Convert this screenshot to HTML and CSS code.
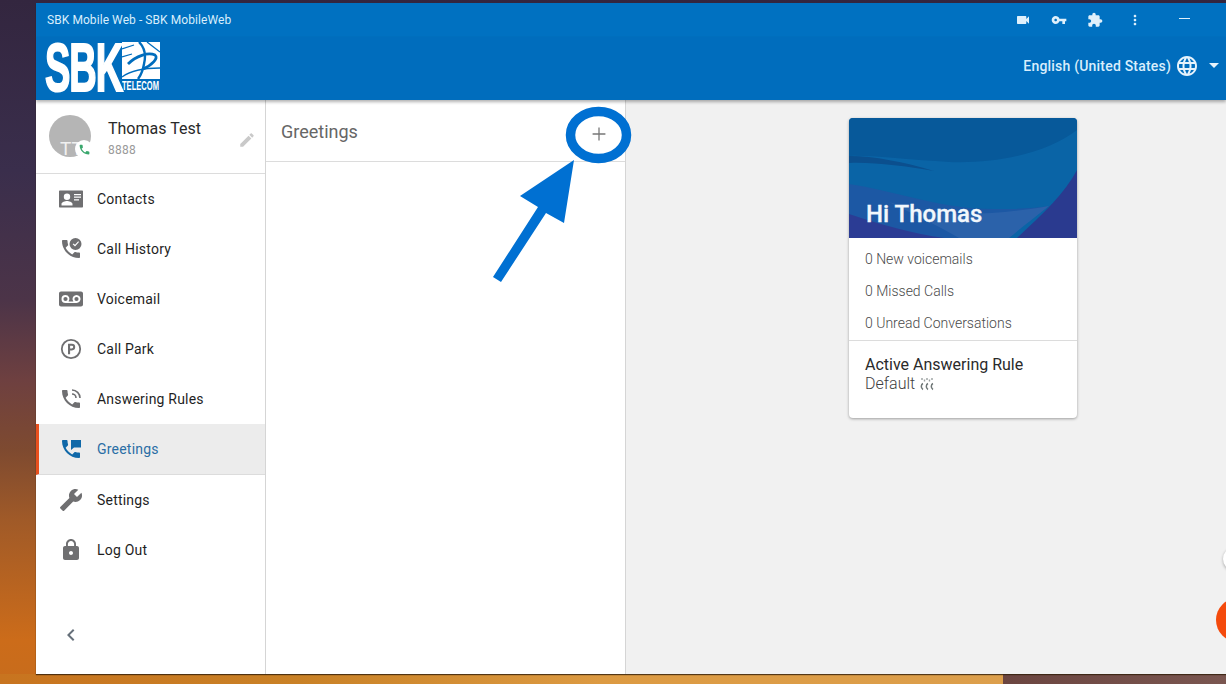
FILE: index.html
```html
<!DOCTYPE html>
<html lang="en">
<head>
<meta charset="utf-8">
<title>SBK Mobile Web</title>
<link rel="stylesheet" href="styles.css">
</head>
<body>
<div class="window">
  <div class="titlebar">
    <span class="title">SBK Mobile Web - SBK MobileWeb</span>
    <div class="title-icons">
      <svg class="ti" viewBox="0 0 24 24"><path d="M17 10.5V7c0-.55-.45-1-1-1H4c-.55 0-1 .45-1 1v10c0 .55.45 1 1 1h12c.55 0 1-.45 1-1v-3.5l4 4v-11l-4 4z"/></svg>
      <svg class="ti" viewBox="0 0 24 24"><path d="M12.65 10C11.83 7.67 9.61 6 7 6c-3.31 0-6 2.69-6 6s2.69 6 6 6c2.61 0 4.83-1.67 5.65-4H17v4h4v-4h2v-4H12.65zM7 14c-1.1 0-2-.9-2-2s.9-2 2-2 2 .9 2 2-.9 2-2 2z"/></svg>
      <svg class="ti" viewBox="0 0 24 24"><path d="M20.5 11H19V7c0-1.1-.9-2-2-2h-4V3.5C13 2.12 11.88 1 10.5 1S8 2.12 8 3.5V5H4c-1.1 0-1.99.9-1.99 2v3.8H3.5c1.49 0 2.7 1.21 2.7 2.7s-1.21 2.7-2.7 2.7H2V20c0 1.1.9 2 2 2h3.8v-1.5c0-1.49 1.21-2.7 2.7-2.7 1.49 0 2.7 1.21 2.7 2.7V22H17c1.1 0 2-.9 2-2v-4h1.5c1.38 0 2.5-1.12 2.5-2.5S21.88 11 20.5 11z"/></svg>
      <svg class="ti ti-more" viewBox="0 0 24 24"><path d="M12 8c1.1 0 2-.9 2-2s-.9-2-2-2-2 .9-2 2 .9 2 2 2zm0 2c-1.1 0-2 .9-2 2s.9 2 2 2 2-.9 2-2-.9-2-2-2zm0 6c-1.1 0-2 .9-2 2s.9 2 2 2 2-.9 2-2-.9-2-2-2z"/></svg>
      <span class="minimize"></span>
    </div>
  </div>
  <header class="header">
    <div class="logo">
      <span class="logo-sbk">SBK</span>
      <div class="logo-side">
        <svg class="logo-globe" viewBox="0 0 38 37">
          <rect width="38" height="37" fill="#fff"/>
          <path d="M0 7L12 3M0 15L10 12M0 35C8 29 22 26 38 26" stroke="#006dbd" stroke-width="1.300" fill="none"/>
          <path d="M25 0L38 10" stroke="#006dbd" stroke-width="1.300" fill="none"/>
          <path d="M6 22C14 14 26 10 33 13C37 16 30 23 21 27" stroke="#006dbd" stroke-width="2.800" fill="none"/>
          <path d="M17 0C23 6 24 14 22 22C21 28 19 33 16 37" stroke="#006dbd" stroke-width="2.400" fill="none"/>
        </svg>
        <span class="logo-telecom">TELECOM</span>
      </div>
    </div>
    <div class="lang">
      <span class="lang-label">English (United States)</span>
      <svg class="globe" viewBox="0 0 24 24"><path d="M11.99 2C6.47 2 2 6.48 2 12s4.47 10 9.99 10C17.52 22 22 17.52 22 12S17.52 2 11.99 2zm6.93 6h-2.95c-.32-1.25-.78-2.45-1.38-3.56 1.84.63 3.37 1.91 4.33 3.56zM12 4.04c.83 1.2 1.48 2.53 1.91 3.96h-3.82c.43-1.43 1.08-2.76 1.91-3.96zM4.26 14C4.1 13.36 4 12.69 4 12s.1-1.36.26-2h3.38c-.08.66-.14 1.32-.14 2 0 .68.06 1.34.14 2H4.26zm.82 2h2.95c.32 1.25.78 2.45 1.38 3.56-1.84-.63-3.37-1.9-4.33-3.56zm2.95-8H5.08c.96-1.66 2.49-2.93 4.33-3.56C8.81 5.55 8.35 6.75 8.03 8zM12 19.96c-.83-1.2-1.48-2.53-1.91-3.96h3.82c-.43 1.43-1.08 2.76-1.91 3.96zM14.34 14H9.66c-.09-.66-.16-1.32-.16-2 0-.68.07-1.35.16-2h4.68c.09.65.16 1.32.16 2 0 .68-.07 1.34-.16 2zm.25 5.56c.6-1.11 1.06-2.31 1.38-3.56h2.95c-.96 1.65-2.49 2.93-4.33 3.56zM16.36 14c.08-.66.14-1.32.14-2 0-.68-.06-1.34-.14-2h3.38c.16.64.26 1.31.26 2s-.1 1.36-.26 2h-3.38z"/></svg>
      <span class="caret"></span>
    </div>
  </header>
  <div class="main">
    <aside class="sidebar">
      <div class="profile">
        <div class="avatar">
          <span class="avatar-text">TT</span>
          <span class="status">
            <svg viewBox="0 0 24 24"><path d="M6.62 10.79c1.44 2.83 3.76 5.14 6.59 6.59l2.2-2.2c.27-.27.67-.36 1.02-.24 1.12.37 2.33.57 3.57.57.55 0 1 .45 1 1V20c0 .55-.45 1-1 1-9.39 0-17-7.61-17-17 0-.55.45-1 1-1h3.5c.55 0 1 .45 1 1 0 1.25.2 2.45.57 3.57.11.35.03.74-.25 1.02l-2.2 2.2z"/></svg>
          </span>
        </div>
        <div class="who">
          <div class="who-name">Thomas Test</div>
          <div class="who-ext">8888</div>
        </div>
        <svg class="edit" viewBox="0 0 24 24"><path d="M3 17.25V21h3.75L17.81 9.94l-3.75-3.75L3 17.25zM20.71 7.04c.39-.39.39-1.02 0-1.41l-2.34-2.34c-.39-.39-1.02-.39-1.41 0l-1.83 1.83 3.75 3.75 1.83-1.83z"/></svg>
      </div>
      <nav class="nav">
        <a class="item">
          <svg class="ico" viewBox="0 0 24 24"><path fill-rule="evenodd" d="M1 3.500h22c.6 0 1 .4 1 1v15c0 .6-.4 1-1 1H1c-.6 0-1-.4-1-1v-15c0-.6.4-1 1-1zm7 3a3.200 3.200 0 1 0 0 6.400 3.200 3.200 0 0 0 0-6.400zM2.500 18.500h11v-1.600c0-1.900-3.700-3-5.500-3s-5.500 1.100-5.500 3v1.600zM15 7v1.200h7V7h-7zm0 2.600v1.200h7V9.600h-7zm0 2.600v1.200h5v-1.200h-5z"/></svg>
          <span>Contacts</span>
        </a>
        <a class="item">
          <svg class="ico" viewBox="0 0 24 24"><path d="M6.620 10.790c1.440 2.830 3.760 5.140 6.590 6.590l2.200-2.200c.27-.27.67-.36 1.020-.24 1.120.37 2.330.57 3.570.57.55 0 1 .45 1 1V20c0 .55-.45 1-1 1-9.390 0-17-7.610-17-17 0-.55.45-1 1-1h3.500c.55 0 1 .45 1 1 0 1.250.2 2.450.57 3.570.11.350.03.740-.25 1.020l-2.200 2.200z"/><path fill-rule="evenodd" d="M16.500 1a6 6 0 1 1 0 12 6 6 0 0 1 0-12zm2.700 3.300-3.200 3.400-1.500-1.300-.8.9 2.300 2.100 4-4.300-.8-.8z"/></svg>
          <span>Call History</span>
        </a>
        <a class="item">
          <svg class="ico" viewBox="0 0 24 24"><path fill-rule="evenodd" d="M2 4.500h20c1.100 0 2 .9 2 2v11c0 1.100-.9 2-2 2H2c-1.100 0-2-.9-2-2v-11c0-1.100.9-2 2-2zm4.500 3.500a4 4 0 0 0 0 8h11a4 4 0 1 0-3.100-1.500H9.600A4 4 0 0 0 6.500 8zm0 1.900a2.100 2.100 0 1 1 0 4.200 2.100 2.100 0 0 1 0-4.200zm11 0a2.100 2.100 0 1 1 0 4.200 2.100 2.100 0 0 1 0-4.200z"/></svg>
          <span>Voicemail</span>
        </a>
        <a class="item">
          <svg class="ico" viewBox="0 0 24 24"><circle cx="12" cy="12" r="9.200" fill="none" stroke="#6f6f71" stroke-width="1.800"/><path fill-rule="evenodd" d="M9 6.800h3.900a3.300 3.300 0 0 1 0 6.600h-1.800v3.800H9V6.800zm2.100 1.900v2.800h1.700a1.400 1.400 0 0 0 0-2.800h-1.700z"/></svg>
          <span>Call Park</span>
        </a>
        <a class="item">
          <svg class="ico" viewBox="0 0 24 24"><path d="M6.620 10.790c1.440 2.830 3.760 5.140 6.590 6.590l2.200-2.200c.27-.27.67-.36 1.020-.24 1.120.37 2.330.57 3.570.57.55 0 1 .45 1 1V20c0 .55-.45 1-1 1-9.390 0-17-7.610-17-17 0-.55.45-1 1-1h3.500c.55 0 1 .45 1 1 0 1.250.2 2.450.57 3.570.11.350.03.740-.25 1.020l-2.200 2.200z"/><path d="M13 3a8 8 0 0 1 8 8M13 7a4 4 0 0 1 4 4" fill="none" stroke="#6f6f71" stroke-width="1.600"/></svg>
          <span>Answering Rules</span>
        </a>
        <a class="item active">
          <svg class="ico" viewBox="0 0 24 24"><path d="M6.620 10.790c1.440 2.830 3.760 5.140 6.590 6.590l2.200-2.200c.27-.27.67-.36 1.020-.24 1.120.37 2.330.57 3.570.57.55 0 1 .45 1 1V20c0 .55-.45 1-1 1-9.390 0-17-7.610-17-17 0-.55.45-1 1-1h3.500c.55 0 1 .45 1 1 0 1.250.2 2.450.57 3.570.11.350.03.740-.25 1.020l-2.200 2.200z"/><path d="M12 3h10v7.500h-7l-3 2.500V3z"/></svg>
          <span>Greetings</span>
        </a>
        <a class="item">
          <svg class="ico flip" viewBox="0 0 24 24"><path d="M22.700 19l-9.100-9.100c.9-2.300.4-5-1.500-6.900-2-2-5-2.400-7.400-1.300L9 6 6 9 1.600 4.700C.4 7.100.9 10.100 2.900 12.100c1.900 1.900 4.600 2.400 6.900 1.500l9.100 9.100c.4.4 1 .4 1.400 0l2.300-2.300c.5-.4.5-1.100.1-1.400z"/></svg>
          <span>Settings</span>
        </a>
        <a class="item">
          <svg class="ico" viewBox="0 0 24 24"><path d="M18 8h-1V6c0-2.760-2.240-5-5-5S7 3.240 7 6v2H6c-1.100 0-2 .9-2 2v10c0 1.100.9 2 2 2h12c1.100 0 2-.9 2-2V10c0-1.100-.9-2-2-2zm-6 9c-1.100 0-2-.9-2-2s.9-2 2-2 2 .9 2 2-.9 2-2 2zm3.100-9H8.900V6c0-1.710 1.390-3.100 3.100-3.100 1.710 0 3.100 1.390 3.100 3.100v2z"/></svg>
          <span>Log Out</span>
        </a>
      </nav>
      <div class="collapse">
        <svg class="ico" viewBox="0 0 24 24"><path d="M15.410 7.410L14 6l-6 6 6 6 1.410-1.410L10.830 12z"/></svg>
      </div>
    </aside>
    <section class="middle">
      <div class="mid-head">
        <span class="mid-title">Greetings</span>
        <svg class="plus" viewBox="0 0 24 24"><path d="M19 12.700h-6.300V19h-1.400v-6.300H5v-1.400h6.300V5h1.400v6.300H19v1.400z"/></svg>
      </div>
    </section>
    <section class="content">
      <div class="card">
        <div class="hero">
          <svg class="hero-art" viewBox="0 0 228 120" preserveAspectRatio="none">
            <rect width="228" height="120" fill="#0a64a6"/>
            <path d="M0 0H228V12C200 34 150 46 100 44C60 42 25 37 0 38Z" fill="#07599a"/>
            <path d="M0 38C25 38 55 44 85 53C55 48 25 44 0 45Z" fill="#0b4f8e"/>
            <path d="M0 66C40 72 80 86 120 90C150 92 180 91 200 88C185 100 170 110 160 120H0Z" fill="#1c58a4"/>
            <path d="M40 84C80 98 130 100 200 88C185 100 172 110 160 120H110C90 108 60 94 40 84Z" fill="#2b62aa"/>
            <path d="M0 96C30 106 65 116 95 120H0Z" fill="#2b3c94"/>
            <path d="M228 52C216 75 195 95 168 120H228Z" fill="#2a3a8f"/>
          </svg>
          <span class="hero-text">Hi Thomas</span>
        </div>
        <div class="stats">
          <div class="stat">0 New voicemails</div>
          <div class="stat">0 Missed Calls</div>
          <div class="stat">0 Unread Conversations</div>
        </div>
        <div class="rule">
          <div class="rule-title">Active Answering Rule</div>
          <div class="rule-value">Default
            <svg class="spin" viewBox="0 0 16 14"><path d="M4 6.500C2 7.500 1.500 11 4 12.500M9 6.500C7 7.500 6.500 11 9 12.500M14 6.500C12 7.500 11.500 11 14 12.500" fill="none" stroke="#6f7777" stroke-width="1.500"/><path d="M3 1v2M8 1v2M13 1v2M5.500 2.500v2M10.500 2.500v2" stroke="#999f9f" stroke-width="1.400"/></svg>
          </div>
        </div>
      </div>
      <span class="fab fab-white"></span>
      <span class="fab fab-orange"></span>
    </section>
  </div>
  <svg class="annot" viewBox="0 0 1226 684" aria-hidden="true">
    <ellipse cx="598.500" cy="135" rx="28" ry="23.500" fill="none" stroke="#0070d2" stroke-width="9.500"/>
    <path d="M574 160L520 196L538 207L493 277L501 282L546 213L564 223Z" fill="#0070d2"/>
  </svg>
</div>
</body>
</html>
```
FILE: styles.css
```css
* { box-sizing: border-box; }
html, body { margin: 0; height: 100%; }
body {
  width: 1226px;
  height: 684px;
  overflow: hidden;
  padding: 3px 0 10px 36px;
  font-family: Roboto, "Liberation Sans", sans-serif;
  color: #202020;
  background:
    linear-gradient(90deg, #c8741f 0, #c98126 300px, #dc9a42 600px, #dc9f4c 1003px, #6b4540 1003px, #7a5650 100%) bottom / 100% 10px no-repeat,
    linear-gradient(180deg, #33263f 0, #3a2e4c 170px, #4c3448 300px, #6e4040 380px, #7e4a30 450px, #a05a28 520px, #cc6c1a 640px, #c76c1c 100%);
}
.window {
  height: 671px;
  display: flex;
  flex-direction: column;
  overflow: hidden;
  box-shadow: 0 1px 1px rgba(50,30,10,.8);
}
.titlebar {
  height: 34px;
  flex: none;
  background: #0071c1;
  color: #d9eefc;
  display: flex;
  align-items: center;
  justify-content: space-between;
  padding-left: 11px;
}
.title { font-size: 12px; letter-spacing: .07px; }
.title-icons { display: flex; align-items: center; gap: 20px; padding-right: 36px; }
.ti { width: 16px; height: 16px; fill: #dff0fb; }
.ti-more { margin-left: 4px; }
.minimize { width: 11px; height: 1px; background: #dff0fb; margin-left: 16px; margin-top: -4px; }
.header {
  height: 63px;
  flex: none;
  background: #006dbd;
  color: #d9eefc;
  display: flex;
  align-items: center;
  justify-content: space-between;
  padding: 0 7px 0 9px;
  box-shadow: 0 2px 3px rgba(0,0,0,.3);
  position: relative;
  z-index: 2;
}
.logo { display: flex; align-items: flex-start; height: 50px; color: #fff; margin-top: -3px; }
.logo-sbk {
  font-family: "Liberation Sans", sans-serif;
  font-weight: 700;
  font-size: 68px;
  line-height: 50px;
  letter-spacing: -2px;
  width: 77px;
  display: block;
  white-space: nowrap;
  -webkit-text-stroke: 2px #fff;
  transform: scaleX(.56);
  transform-origin: left center;
}
.logo-side { display: flex; flex-direction: column; width: 38px; }
.logo-globe { width: 38px; height: 37px; display: block; }
.logo-telecom {
  font-family: "Liberation Sans", sans-serif;
  font-weight: 700;
  font-size: 12px;
  line-height: 12px;
  height: 12px;
  margin-top: 1px;
  white-space: nowrap;
  display: block;
  transform: scaleX(.63);
  transform-origin: left center;
  width: 38px;
}
.lang { display: flex; align-items: center; margin-top: -6px; }
.lang-label { font-size: 14px; font-weight: 500; letter-spacing: .2px; }
.globe { width: 24px; height: 24px; fill: #e6f3fc; margin-left: 4px; }
.caret {
  width: 0;
  height: 0;
  border-left: 5px solid transparent;
  border-right: 5px solid transparent;
  border-top: 5px solid #e6f3fc;
  margin-left: 10px;
}
.main { flex: 1; display: flex; min-height: 0; background: #fff; }
.sidebar {
  width: 230px;
  flex: none;
  border-right: 1px solid #d5d5d5;
  display: flex;
  flex-direction: column;
}
.profile {
  height: 74px;
  flex: none;
  border-bottom: 1px solid #dcdcdc;
  display: flex;
  align-items: center;
  padding: 0 9px 0 13px;
}
.avatar {
  width: 42px;
  height: 42px;
  border-radius: 50%;
  background: #b5b5b5;
  position: relative;
  flex: none;
  margin-top: -1px;
}
.avatar-text {
  position: absolute;
  left: 11px;
  bottom: 1px;
  font-size: 19px;
  line-height: 14px;
  color: #f0f0f0;
}
.status {
  position: absolute;
  right: -2px;
  bottom: -1px;
  width: 18px;
  height: 18px;
  border-radius: 50%;
  background: #fff;
  display: flex;
  align-items: center;
  justify-content: center;
}
.status svg { width: 13px; height: 13px; fill: #3aa76d; }
.who { flex: 1; padding-left: 17px; margin-top: 3px; }
.who-name { font-size: 16px; line-height: 20px; color: #2a2a2a; }
.who-ext { font-size: 12px; line-height: 16px; margin-top: 3px; color: #9a9a9a; letter-spacing: .02em; }
.edit { width: 18px; height: 18px; fill: #c9c9c9; margin-top: 6px; }
.nav { display: flex; flex-direction: column; }
.item {
  height: 50px;
  display: flex;
  align-items: center;
  padding-left: 23px;
  font-size: 14px;
  color: #1f1f1f;
  letter-spacing: .015em;
}
.item span { margin-left: 14px; }
.item .ico { fill: #6f6f71; }
.ico { width: 24px; height: 24px; flex: none; }
.flip { transform: scaleX(-1); }
.item.active {
  background: #ececec;
  border-left: 3px solid #e8501e;
  border-bottom: 1px solid #dcdcdc;
  padding-left: 20px;
  height: 51px;
  color: #2a6ea5;
}
.item.active .ico { fill: #0f68a8; }
.collapse { margin-top: auto; height: 51px; padding-left: 23px; display: flex; align-items: flex-start; }
.collapse .ico { fill: #66707a; }
.middle {
  width: 360px;
  flex: none;
  border-right: 1px solid #d5d5d5;
}
.mid-head {
  height: 62px;
  border-bottom: 1px solid #dcdcdc;
  display: flex;
  align-items: center;
  justify-content: space-between;
  padding: 0 15px;
}
.mid-title { font-size: 18px; color: #666; margin-top: 2px; }
.plus { width: 22px; height: 22px; fill: #777; margin-top: 6px; }
.content {
  flex: 1;
  background: #f1f1f1;
  position: relative;
  display: flex;
  align-items: flex-start;
  padding: 18px 0 0 223px;
}
.card {
  width: 228px;
  height: 300px;
  background: #fff;
  border-radius: 4px;
  overflow: hidden;
  box-shadow: 0 1px 3px rgba(0,0,0,.35);
}
.hero { height: 120px; position: relative; }
.hero-art { position: absolute; inset: 0; width: 100%; height: 100%; display: block; }
.hero-text {
  position: absolute;
  left: 17px;
  bottom: 10px;
  color: #f2f7fc;
  font-size: 24px;
  font-weight: 500;
  -webkit-text-stroke: .3px #f2f7fc;
  line-height: 28px;
}
.stats { padding: 5px 16px 1px; border-bottom: 1px solid #dcdcdc; height: 103px; }
.stat { font-size: 14px; font-weight: 300; line-height: 32px; color: #4a4a4a; }
.rule { padding: 14px 16px; }
.rule-title { font-size: 16px; line-height: 19px; color: #2a2a2a; }
.rule-value { font-size: 16px; font-weight: 300; line-height: 19px; color: #3e3e3e; display: flex; align-items: center; gap: 4px; }
.spin { width: 16px; height: 14px; }
.fab { position: absolute; border-radius: 50%; }
.fab-white { width: 24px; height: 24px; left: 597px; top: 447px; background: #fff; box-shadow: 0 1px 3px rgba(0,0,0,.3); }
.fab-orange { width: 44px; height: 44px; left: 590px; top: 498px; background: #f44a0c; }
.annot { position: absolute; left: 0; top: 0; width: 1226px; height: 684px; pointer-events: none; z-index: 5; }
```
